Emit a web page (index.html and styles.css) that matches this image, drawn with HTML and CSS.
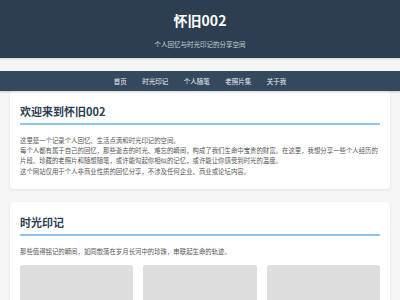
FILE: index.html
```html
<!DOCTYPE html>
<html lang="zh-CN">
<head>
<meta charset="utf-8">
<title>怀旧002</title>
<link rel="stylesheet" href="styles.css">
</head>
<body>
<header class="site-header">
  <h1 class="site-title">怀旧002</h1>
  <p class="site-subtitle">个人回忆与时光印记的分享空间</p>
</header>
<nav class="site-nav">
  <a href="#">首页</a>
  <a href="#">时光印记</a>
  <a href="#">个人随笔</a>
  <a href="#">老照片集</a>
  <a href="#">关于我</a>
</nav>
<main class="main">
  <section class="card">
    <h2 class="card-title">欢迎来到怀旧002</h2>
    <div class="card-body">
      <p>这里是一个记录个人回忆、生活点滴和时光印记的空间。</p>
      <p>每个人都有属于自己的回忆，那些逝去的时光、难忘的瞬间，构成了我们生命中宝贵的财富。在这里，我想分享一些个人经历的片段、珍藏的老照片和随想随笔，或许能勾起你相似的记忆，或许能让你感受到时光的温度。</p>
      <p>这个网站仅用于个人非商业性质的回忆分享，不涉及任何企业、商业或论坛内容。</p>
    </div>
  </section>
  <section class="card">
    <h2 class="card-title">时光印记</h2>
    <div class="card-body">
      <p>那些值得铭记的瞬间，如同散落在岁月长河中的珍珠，串联起生命的轨迹。</p>
    </div>
    <div class="gallery">
      <div class="photo"></div>
      <div class="photo"></div>
      <div class="photo"></div>
    </div>
  </section>
</main>
</body>
</html>
```

FILE: styles.css
```css
* { box-sizing: border-box; }
html, body { margin: 0; padding: 0; }
body {
  background: #f5f5f5;
  font-family: "Noto Sans CJK SC", "Noto Sans", sans-serif;
  color: #555;
}
.site-header {
  background: #2c3e50;
  color: #fff;
  text-align: center;
  padding: 10px 0 9px;
  margin-bottom: 13px;
  box-shadow: 0 1px 2px rgba(0,0,0,0.15);
}
.site-title {
  margin: 0;
  font-size: 14px;
  line-height: 20px;
  font-weight: 700;
}
.site-subtitle {
  margin: 9px 0 0;
  font-size: 6.5px;
  line-height: 10px;
  color: #c8d0d8;
}
.site-nav {
  position: relative;
  z-index: 2;
  background: #34495e;
  height: 20px;
  display: flex;
  justify-content: center;
  align-items: center;
  gap: 15.5px;
  box-shadow: 0 1px 2px rgba(0,0,0,0.2);
}
.site-nav a {
  color: #ecf0f1;
  text-decoration: none;
  font-size: 6.5px;
  line-height: 10px;
}
.main {
  padding: 0 10px;
  display: flex;
  flex-direction: column;
  gap: 13px;
}
.card {
  background: #fff;
  border-radius: 4px;
  box-shadow: 0 1px 3px rgba(0,0,0,0.08);
  padding: 10px 10px 12px;
}
.card-title {
  margin: 0;
  font-size: 11px;
  line-height: 20px;
  font-weight: 700;
  color: #2c3e50;
  padding-bottom: 2px;
  border-bottom: 2px solid #8ec5ec;
}
.card-body {
  margin-top: 10.5px;
}
.card-body p {
  margin: 0;
  font-size: 6.4px;
  line-height: 10.4px;
  color: #555;
}
.gallery {
  margin-top: 8px;
  display: grid;
  grid-template-columns: repeat(3, 1fr);
  gap: 10px;
}
.photo {
  height: 80px;
  background: #ddd;
  border-radius: 3px;
}
```
